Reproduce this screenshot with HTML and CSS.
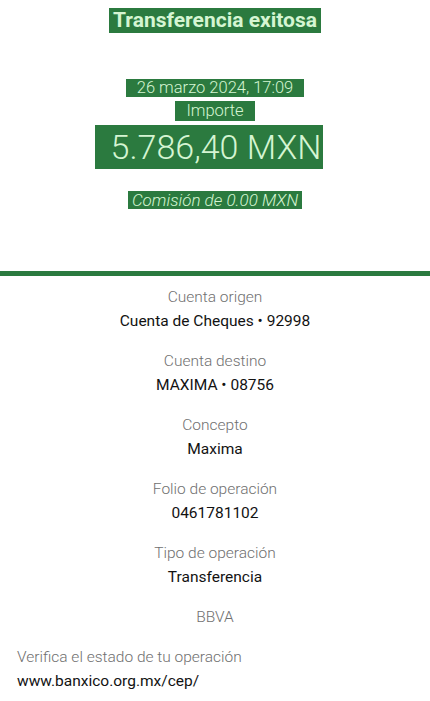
FILE: index.html
```html
<!DOCTYPE html>
<html lang="es">
<head>
<meta charset="utf-8"/>
<meta content="width=device-width, initial-scale=1.0" name="viewport"/>
<title>Transferencia exitosa</title>
<link rel="stylesheet" href="styles.css">
</head>
<body>
<div class="receipt">
  <div class="summary">
    <h1 class="title"><span class="mark">Transferencia exitosa</span></h1>
    <p class="date"><span class="mark">26 marzo 2024, 17:09</span></p>
    <p class="amount-label"><span class="mark">Importe</span></p>
    <p class="amount"><span class="mark">5.786,40 MXN</span></p>
    <p class="fee"><span class="mark">Comisión de 0.00 MXN</span></p>
  </div>
  <div class="divider"></div>
  <div class="details">
    <div class="item">
      <div class="label">Cuenta origen</div>
      <div class="value">Cuenta de Cheques • 92998</div>
    </div>
    <div class="item">
      <div class="label">Cuenta destino</div>
      <div class="value">MAXIMA • 08756</div>
    </div>
    <div class="item">
      <div class="label">Concepto</div>
      <div class="value">Maxima</div>
    </div>
    <div class="item">
      <div class="label">Folio de operación</div>
      <div class="value">0461781102</div>
    </div>
    <div class="item">
      <div class="label">Tipo de operación</div>
      <div class="value">Transferencia</div>
    </div>
    <div class="item">
      <div class="label">BBVA</div>
    </div>
  </div>
  <div class="verify">
    <div class="label">Verifica el estado de tu operación</div>
    <div class="value">www.banxico.org.mx/cep/</div>
  </div>
</div>
</body>
</html>
```

FILE: styles.css
```css
body {
  margin: 0;
  background: #ffffff;
  font-family: Roboto, 'Liberation Sans', sans-serif;
  color: #121212;
}

.receipt {
  width: 430px;
}

.summary {
  display: flex;
  flex-direction: column;
  align-items: center;
  padding-top: 8px;
  height: 271px;
  box-sizing: border-box;
}

.summary p,
.summary h1 {
  margin: 0;
}

.mark {
  display: inline-block;
  background: #2b7a3f;
  color: #d5f5d2;
}

.title {
  font-size: 21px;
  font-weight: 700;
  line-height: 25px;
}

.title .mark {
  padding: 0 4px;
}

.date {
  margin-top: 46px !important;
  font-size: 16.5px;
  font-weight: 300;
  line-height: 18px;
}

.date .mark {
  padding: 0 11px;
}

.amount-label {
  margin-top: 4px !important;
  font-size: 16.5px;
  font-weight: 300;
  line-height: 20px;
}

.amount-label .mark {
  padding: 0 11px;
}

.amount {
  margin-top: 4px !important;
  font-size: 34px;
  font-weight: 300;
  line-height: 44px;
}

.amount .mark {
  padding: 0 2px 0 16px;
  margin-right: 12px;
}

.fee {
  margin-top: 22px !important;
  font-size: 17px;
  font-weight: 300;
  font-style: italic;
  line-height: 18px;
}

.fee .mark {
  padding: 0 4px;
}

.divider {
  height: 5px;
  background: #2b7a3f;
  margin-bottom: 9px;
}

.details {
  display: flex;
  flex-direction: column;
  align-items: center;
  gap: 16px;
}

.item {
  text-align: center;
}

.label {
  font-size: 15.5px;
  font-weight: 300;
  color: #707070;
  line-height: 24px;
}

.value {
  font-size: 15.5px;
  color: #121212;
  line-height: 24px;
}

.verify {
  margin-top: 16px;
  padding-left: 17px;
}
```
